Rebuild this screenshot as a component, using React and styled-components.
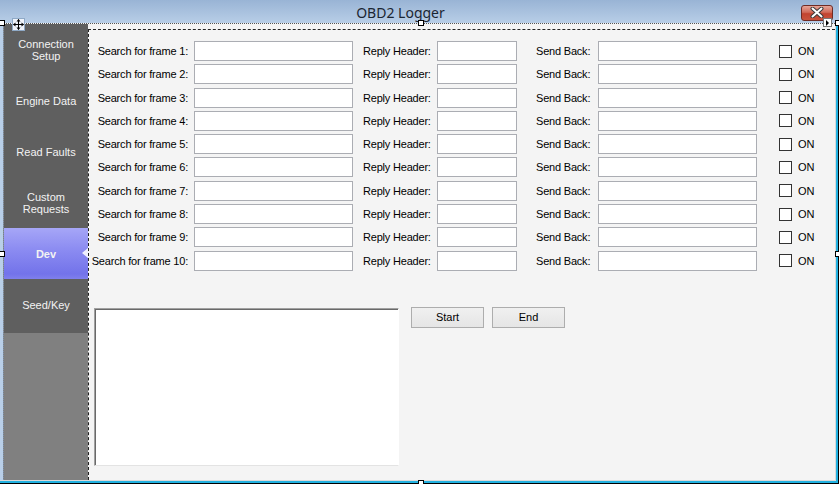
import styled, { createGlobalStyle } from 'styled-components';

const GlobalStyle = createGlobalStyle`
  html, body { margin: 0; padding: 0; background: #fff; }
  body { font-family: "Liberation Sans", Arial, sans-serif; }
`;

const Window = styled.div`
  position: relative;
  width: 839px;
  height: 484px;
  display: flex;
  flex-direction: column;
  background: #b9cfe8;
  box-shadow: inset -1px -1px 0 #000, inset -3px -3px 0 #22b1e0, inset -4px -4px 0 #d9d9d9;
  overflow: hidden;
`;

const TitleBar = styled.div`
  flex: none;
  height: 23px;
  display: flex;
  align-items: center;
  background: linear-gradient(#99b4d5, #b8cee7);
`;

const Title = styled.div`
  flex: 1;
  text-align: center;
  font-family: "Noto Sans", "Open Sans", sans-serif;
  font-size: 14px;
  color: #1b2633;
  padding-top: 1px;
`;

const CloseButton = styled.div`
  width: 32px;
  height: 16px;
  margin: 2px 6px 0 0;
  box-sizing: border-box;
  border: 1px solid #6f2b24;
  border-radius: 3px;
  background: linear-gradient(#e6a598, #d06a58 45%, #c2432f 55%, #c9533d);
  display: flex;
  align-items: center;
  justify-content: center;
`;

const Client = styled.div`
  flex: 1;
  display: flex;
  margin: 0 4px 4px 3px;
  border-top: 1px dotted #555;
  background: #f4f4f4;
  min-height: 0;
`;

const Sidebar = styled.div`
  width: 84px;
  flex: none;
  background: #808080;
  border-left: 1px dotted #7e93ad;
`;

const NavStack = styled.div`
  background: #5f5f5f;
  padding-bottom: 3px;
`;

const NavButton = styled.div`
  position: relative;
  height: 51px;
  display: flex;
  align-items: center;
  justify-content: center;
  text-align: center;
  font-size: 11px;
  line-height: 12px;
  color: #f3f3f3;
  font-weight: ${p => (p.$active ? 'bold' : 'normal')};
  background: ${p => (p.$active ? 'linear-gradient(#a6a6f7, #8a8af1 45%, #7373ea 90%, #8080ec)' : 'transparent')};

  &::after {
    content: '';
    display: ${p => (p.$active ? 'block' : 'none')};
    position: absolute;
    right: 0;
    top: 20px;
    border-style: solid;
    border-width: 5px 6px 5px 0;
    border-color: transparent #eeeefc transparent transparent;
  }
`;

const Main = styled.div`
  flex: 1;
  margin-top: 5px;
  border-top: 1px dashed #222;
  border-left: 1px dashed #222;
  padding: 11px 0 0 1px;
`;

const FrameGrid = styled.div`
  display: grid;
  grid-template-columns: 104px 159px 84px 80px 81px 159px auto;
  grid-auto-rows: 20px;
  row-gap: 3.3px;
  align-items: center;
`;

const Label = styled.div`
  font-size: 11px;
  letter-spacing: -0.2px;
  color: #000;
  white-space: nowrap;
  text-align: ${p => (p.$right ? 'right' : 'left')};
  padding: ${p => (p.$right ? '0 6px 0 0' : `0 0 0 ${p.$indent || 0}px`)};
`;

const TextBox = styled.input`
  box-sizing: border-box;
  width: 100%;
  height: 20px;
  margin: 0;
  border: 1px solid #abadb3;
  background: #fff;
  outline: none;
`;

const CheckCell = styled.label`
  display: flex;
  align-items: center;
  padding-left: 22px;
  font-size: 11px;
  color: #000;
`;

const CheckBox = styled.span`
  width: 13px;
  height: 13px;
  box-sizing: border-box;
  border: 1px solid #333;
  background: #fff;
  margin-right: 6px;
`;

const Lower = styled.div`
  display: flex;
  align-items: flex-start;
  margin-top: 37px;
  padding-left: 4px;
`;

const LogBox = styled.div`
  width: 305px;
  height: 158px;
  box-sizing: border-box;
  background: #fff;
  border-top: 1px solid #a0a0a0;
  border-left: 1px solid #a0a0a0;
  border-right: 1px solid #fff;
  border-bottom: 1px solid #e3e3e3;
  box-shadow: inset 1px 1px 0 #696969;
`;

const ButtonRow = styled.div`
  display: flex;
  gap: 8px;
  margin: -1px 0 0 12px;
`;

const Button = styled.div`
  width: 73px;
  height: 21px;
  box-sizing: border-box;
  border: 1px solid #adadad;
  background: linear-gradient(#f0f0f0, #e5e5e5);
  display: flex;
  align-items: center;
  justify-content: center;
  font-size: 11px;
  color: #000;
`;

const Handle = styled.div`
  position: absolute;
  left: ${p => p.$x}px;
  top: ${p => p.$y}px;
  width: 6px;
  height: 6px;
  box-sizing: border-box;
  background: #fff;
  border: 1px solid #000;
`;

const MoveGlyph = styled.div`
  position: absolute;
  left: 12px;
  top: 18px;
  width: 13px;
  height: 13px;
  box-sizing: border-box;
  background: #eef3fa;
  border: 1px solid #8fa9c6;
  display: flex;
  align-items: center;
  justify-content: center;
`;

const SmartTag = styled.div`
  position: absolute;
  left: 823px;
  top: 18px;
  width: 9px;
  height: 9px;
  box-sizing: border-box;
  background: #fff;
  border: 1px solid #777;
  display: flex;
  align-items: center;
  justify-content: center;

  &::before {
    content: '';
    border-style: solid;
    border-width: 3px 0 3px 3px;
    border-color: transparent transparent transparent #000;
  }
`;

const navItems = [
  ['Connection', 'Setup'],
  ['Engine Data'],
  ['Read Faults'],
  ['Custom', 'Requests'],
  ['Dev'],
  ['Seed/Key'],
];

const frames = Array.from({ length: 10 }, (_, i) => i + 1);

export default function App() {
  return (
    <>
      <GlobalStyle />
      <Window>
        <TitleBar>
          <Title>OBD2 Logger</Title>
          <CloseButton>
            <svg width="14" height="11" viewBox="0 0 14 11">
              <path d="M2.5 1.5 L11.5 9.5 M11.5 1.5 L2.5 9.5" stroke="#3a3a3a" strokeWidth="4" strokeLinecap="round" />
              <path d="M2.5 1.5 L11.5 9.5 M11.5 1.5 L2.5 9.5" stroke="#fff" strokeWidth="2" strokeLinecap="round" />
            </svg>
          </CloseButton>
        </TitleBar>
        <Client>
          <Sidebar>
            <NavStack>
              {navItems.map(lines => (
                <NavButton key={lines[0]} $active={lines[0] === 'Dev'}>
                  <div>
                    {lines.map(l => (
                      <div key={l}>{l}</div>
                    ))}
                  </div>
                </NavButton>
              ))}
            </NavStack>
          </Sidebar>
          <Main>
            <FrameGrid>
              {frames.map(n => (
                <div key={n} style={{ display: 'contents' }}>
                  <Label $right>Search for frame {n}:</Label>
                  <TextBox readOnly />
                  <Label $indent={10}>Reply Header:</Label>
                  <TextBox readOnly />
                  <Label $indent={19}>Send Back:</Label>
                  <TextBox readOnly />
                  <CheckCell>
                    <CheckBox />
                    ON
                  </CheckCell>
                </div>
              ))}
            </FrameGrid>
            <Lower>
              <LogBox />
              <ButtonRow>
                <Button>Start</Button>
                <Button>End</Button>
              </ButtonRow>
            </Lower>
          </Main>
        </Client>

        <Handle $x={-1} $y={20} />
        <Handle $x={418} $y={20} />
        <Handle $x={835} $y={20} />
        <Handle $x={-1} $y={251} />
        <Handle $x={835} $y={251} />
        <Handle $x={418} $y={480} />
        <MoveGlyph>
          <svg width="11" height="11" viewBox="0 0 11 11">
            <path d="M5.5 0.5 V10.5 M0.5 5.5 H10.5" stroke="#000" strokeWidth="1" />
            <path d="M5.5 0 L3.5 2.5 H7.5 Z M5.5 11 L3.5 8.5 H7.5 Z M0 5.5 L2.5 3.5 V7.5 Z M11 5.5 L8.5 3.5 V7.5 Z" fill="#000" />
          </svg>
        </MoveGlyph>
        <SmartTag />
      </Window>
    </>
  );
}
